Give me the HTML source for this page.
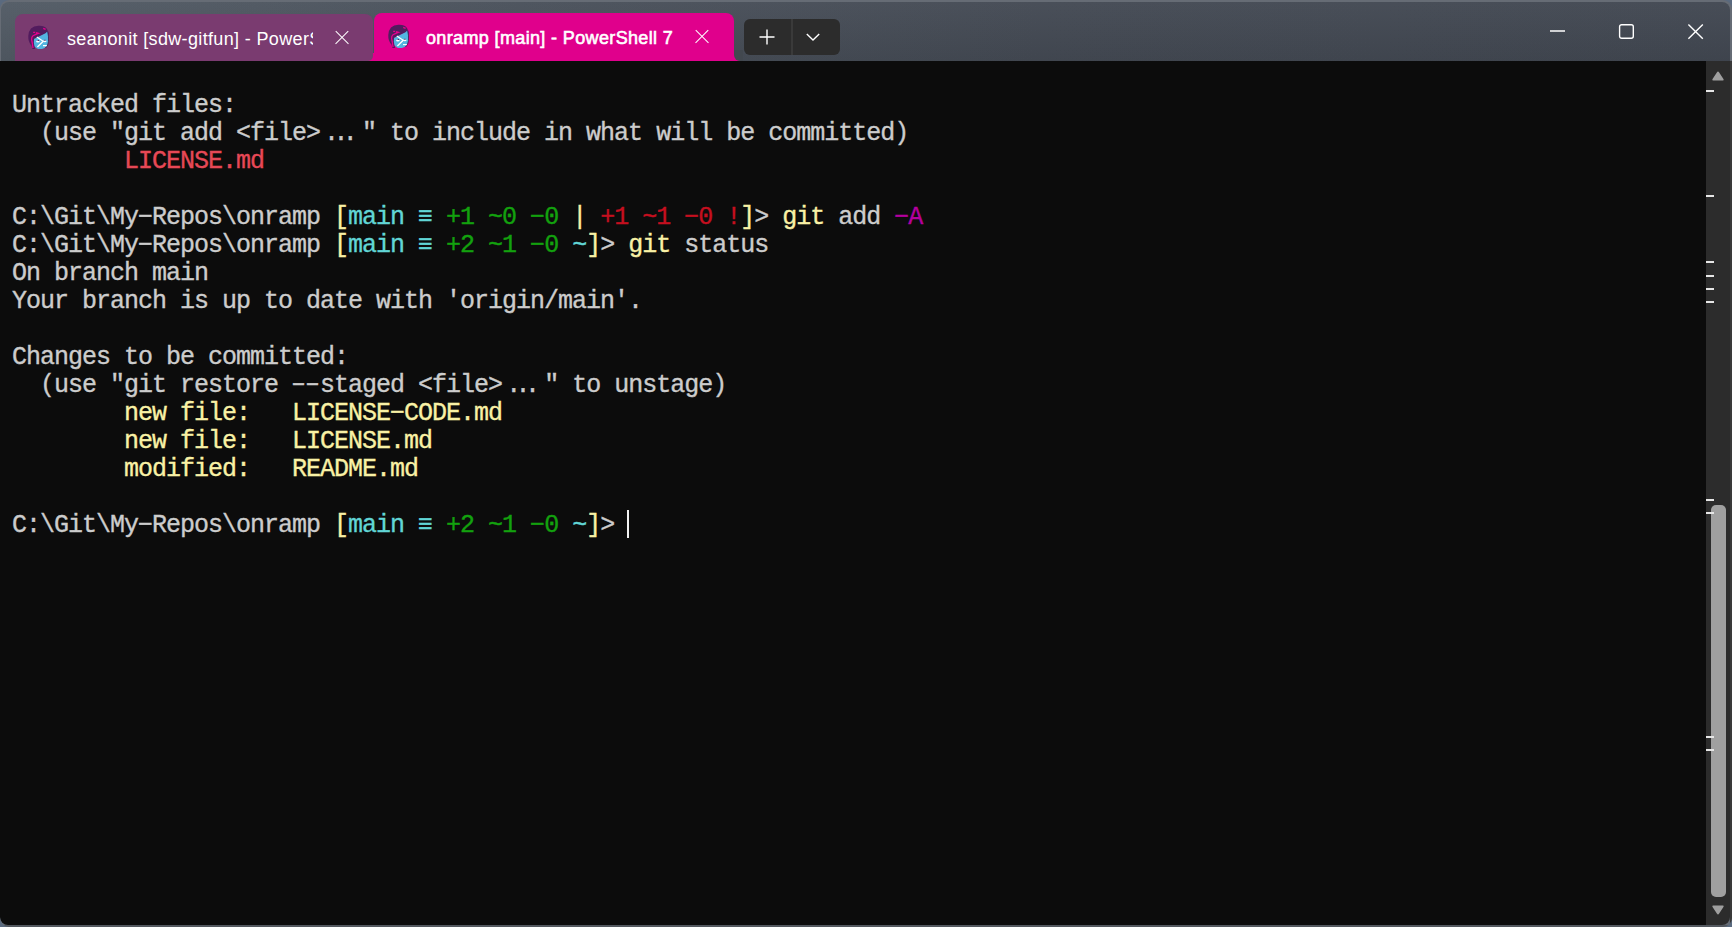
<!DOCTYPE html>
<html><head><meta charset="utf-8">
<style>
html,body{margin:0;padding:0;}
body{width:1732px;height:927px;overflow:hidden;position:relative;background:#5a6a7f;}
.win{position:absolute;left:0;top:0;width:1732px;height:927px;border-radius:9px;background:#666c75;overflow:hidden;}
.title{position:absolute;left:1px;top:2px;width:1729px;height:59px;border-radius:8px 8px 0 0;background:linear-gradient(to bottom,rgba(255,255,255,0.025),rgba(0,0,0,0.07)),linear-gradient(to right,#535c66 0%,#4b525c 30%,#454b55 60%,#434953 100%);}
.term{position:absolute;left:0;top:61px;width:1706px;height:864px;background:#0c0c0c;border-bottom-left-radius:8px;}
.sb{position:absolute;left:1706px;top:61px;width:24px;height:864px;background:#2c2c2c;border-bottom-right-radius:8px;}
.tab{position:absolute;top:14px;height:47px;border-radius:8px 8px 0 0;font-family:"Liberation Sans",sans-serif;font-size:18px;color:#fff;white-space:nowrap;overflow:hidden;}
.t1{left:15px;width:358px;background:#7a3b70;border-bottom-right-radius:5px;}
.t2{left:374px;top:13px;height:48px;width:360px;background:#e0008c;}
.ttl{position:absolute;top:11px;}
.line{position:absolute;left:12px;font-family:"Liberation Mono",monospace;font-size:25px;line-height:28px;height:28px;letter-spacing:-1px;margin-top:2px;-webkit-text-stroke:0.35px currentColor;white-space:pre;color:#cccccc;}
.r{color:#e74856}.R{color:#c50f1f}.g{color:#13a10e}.y{color:#f9f1a5}.c{color:#61d6d6}.m{color:#b4009e}
.ell{letter-spacing:-5.6px;padding-left:4px;padding-right:9.8px;}
.t1t{left:52px;top:15px;width:246px;overflow:hidden;letter-spacing:0.35px;}
.t2t{left:52px;top:15px;letter-spacing:0.36px;-webkit-text-stroke:0.6px #fff;}
.xi{position:absolute;width:16px;height:16px;}
.xi:before,.xi:after{content:"";position:absolute;left:-1px;top:7.4px;width:18px;height:1.3px;background:#fff;transform:rotate(45deg);}
.xi:after{transform:rotate(-45deg);}
.nt{position:absolute;left:744px;top:19px;width:96px;height:36px;border-radius:6px;background:#2c2c2c;}
.ntd{position:absolute;left:47px;top:0;width:2px;height:36px;background:#3a3a3a;}
.mark{position:absolute;left:1706px;width:8px;height:2px;background:#e6e6e6;}
</style></head><body>
<div class="win">
 <div class="title"></div>
 <div style="position:absolute;left:366px;top:53px;width:10px;height:8px;background:#e0008c"></div>
 <div style="position:absolute;left:732px;top:53px;width:9px;height:8px;background:#e0008c"></div>
 <div style="position:absolute;left:734px;top:50px;width:9px;height:11px;background:#42484f;border-bottom-left-radius:6px"></div>
 <div class="tab t1"><span class="ttl t1t">seanonit [sdw-gitfun] - PowerS</span></div>
 <div class="tab t2"><span class="ttl t2t">onramp [main] - PowerShell 7</span></div>
<svg class="ico" width="26" height="30" viewBox="0 0 26 30" style="position:absolute;left:25px;top:22px">
<path d="M6 6.5 Q9 3.6 14 3.8 Q19.5 3.6 22 7 L23.6 11 L23.8 17 L20.5 11.5 L9.5 16.5 L9.2 22 L10 27 L7.5 27 L6.5 23.5 Q3 20 3.3 14 Q3.6 9 6 6.5 Z" fill="#521c5e"/>
<path d="M9 17 L20.5 11.2 L22.6 9.2 Q23.8 14 23.5 19.5 Q23 25.5 17 27 Q11.5 27.6 9.6 24.2 Q8.4 21 9 17 Z" fill="#52b5e0"/>
<path d="M22.6 9.2 Q23.8 14 23.5 19.5 Q23.2 24 20.5 26" stroke="#3b1a4c" stroke-width="0.8" fill="none"/>
<path d="M8.2 10.3 L10.2 10.4 M11 10.7 L13.2 11.3 Q11 12 8 13.8 Q6.5 15 6.6 17.5 L7.3 21 L8 26" stroke="#e8008f" stroke-width="1.3" fill="none"/>
<path d="M18.2 6.3 L20.6 7.4" stroke="#e8008f" stroke-width="1.3" fill="none"/>
<path d="M11.8 15 L18.2 19.3 L12.4 25" stroke="#fff" stroke-width="1.3" fill="none"/>
<path d="M18 23.6 L21.8 23.6" stroke="#fff" stroke-width="1.1" fill="none"/>
<ellipse cx="12.9" cy="19.5" rx="1.8" ry="1.05" fill="#fff"/><ellipse cx="19.9" cy="19.2" rx="1.6" ry="0.95" fill="#fff"/>
<path d="M12.6 18.5 L14 18.5 M19.2 18.3 L20.6 18.3" stroke="#5a1e55" stroke-width="0.9" fill="none"/>
</svg><svg class="ico" width="26" height="30" viewBox="0 0 26 30" style="position:absolute;left:385px;top:21px">
<path d="M6 6.5 Q9 3.6 14 3.8 Q19.5 3.6 22 7 L23.6 11 L23.8 17 L20.5 11.5 L9.5 16.5 L9.2 22 L10 27 L7.5 27 L6.5 23.5 Q3 20 3.3 14 Q3.6 9 6 6.5 Z" fill="#521c5e"/>
<path d="M9 17 L20.5 11.2 L22.6 9.2 Q23.8 14 23.5 19.5 Q23 25.5 17 27 Q11.5 27.6 9.6 24.2 Q8.4 21 9 17 Z" fill="#52b5e0"/>
<path d="M22.6 9.2 Q23.8 14 23.5 19.5 Q23.2 24 20.5 26" stroke="#3b1a4c" stroke-width="0.8" fill="none"/>
<path d="M8.2 10.3 L10.2 10.4 M11 10.7 L13.2 11.3 Q11 12 8 13.8 Q6.5 15 6.6 17.5 L7.3 21 L8 26" stroke="#e8008f" stroke-width="1.3" fill="none"/>
<path d="M18.2 6.3 L20.6 7.4" stroke="#e8008f" stroke-width="1.3" fill="none"/>
<path d="M11.8 15 L18.2 19.3 L12.4 25" stroke="#fff" stroke-width="1.3" fill="none"/>
<path d="M18 23.6 L21.8 23.6" stroke="#fff" stroke-width="1.1" fill="none"/>
<ellipse cx="12.9" cy="19.5" rx="1.8" ry="1.05" fill="#fff"/><ellipse cx="19.9" cy="19.2" rx="1.6" ry="0.95" fill="#fff"/>
<path d="M12.6 18.5 L14 18.5 M19.2 18.3 L20.6 18.3" stroke="#5a1e55" stroke-width="0.9" fill="none"/>
</svg>
 <div class="xi" style="left:334px;top:30px"></div>
 <div class="xi" style="left:694px;top:28.5px"></div>
 <div class="nt"><div class="ntd"></div>
  <svg width="18" height="18" viewBox="0 0 18 18" style="position:absolute;left:14px;top:9px"><path d="M9 1.5 V16.5 M1.5 9 H16.5" stroke="#fff" stroke-width="1.4" fill="none"/></svg>
  <svg width="16" height="10" viewBox="0 0 16 10" style="position:absolute;left:61px;top:13px"><path d="M1.8 2 L8 8 L14.2 2" stroke="#fff" stroke-width="1.4" fill="none"/></svg>
 </div>
 <svg width="16" height="4" style="position:absolute;left:1550px;top:29px"><path d="M0 2 H15" stroke="#fff" stroke-width="1.4"/></svg>
 <svg width="18" height="18" style="position:absolute;left:1618px;top:23px"><rect x="1.6" y="1.7" width="13.7" height="13.6" rx="2" stroke="#fff" stroke-width="1.4" fill="none"/></svg>
 <svg width="18" height="18" style="position:absolute;left:1687px;top:23px"><path d="M1.4 1.4 L15.8 15.8 M15.8 1.4 L1.4 15.8" stroke="#fff" stroke-width="1.4" fill="none"/></svg>
 <div class="term"></div>
 <div class="sb"></div>
 <div style="position:absolute;left:1730px;top:61px;width:2px;height:866px;background:#3a3a3a"></div>
 <div style="position:absolute;left:0;top:925px;width:1732px;height:2px;background:#53585f"></div>
</div>
<div class="line" style="top:90px">Untracked files:</div>
<div class="line" style="top:118px">  (use "git add &lt;file&gt;<span class="ell">...</span>" to include in what will be committed)</div>
<div class="line" style="top:146px">        <span class="r">LICENSE.md</span></div>
<div class="line" style="top:202px">C:\Git\My−Repos\onramp <span class="y">[</span><span class="c">main ≡</span> <span class="g">+1 ~0 −0</span> <span class="y">|</span> <span class="R">+1 ~1 −0 !</span><span class="y">]</span>&gt; <span class="y">git</span> add <span class="m">−A</span></div>
<div class="line" style="top:230px">C:\Git\My−Repos\onramp <span class="y">[</span><span class="c">main ≡</span> <span class="g">+2 ~1 −0</span> <span class="c">~</span><span class="y">]</span>&gt; <span class="y">git</span> status</div>
<div class="line" style="top:258px">On branch main</div>
<div class="line" style="top:286px">Your branch is up to date with 'origin/main'.</div>
<div class="line" style="top:342px">Changes to be committed:</div>
<div class="line" style="top:370px">  (use "git restore <span style="position:relative;top:-1.5px;left:-1px">––</span>staged &lt;file&gt;<span class="ell">...</span>" to unstage)</div>
<div class="line" style="top:398px">        <span class="y">new file:   LICENSE−CODE.md</span></div>
<div class="line" style="top:426px">        <span class="y">new file:   LICENSE.md</span></div>
<div class="line" style="top:454px">        <span class="y">modified:   README.md</span></div>
<div class="line" style="top:510px">C:\Git\My−Repos\onramp <span class="y">[</span><span class="c">main ≡</span> <span class="g">+2 ~1 −0</span> <span class="c">~</span><span class="y">]</span>&gt; </div>
<div style="position:absolute;left:627px;top:510px;width:2px;height:28px;background:#f2f2f2"></div>
<svg width="14" height="12" style="position:absolute;left:1711px;top:70px"><path d="M7 1.5 Q7.6 1.5 8 2.2 L12.6 9.2 Q13 10.5 11.8 10.5 L2.2 10.5 Q1 10.5 1.4 9.2 L6 2.2 Q6.4 1.5 7 1.5 Z" fill="#9f9f9f"/></svg>
<svg width="14" height="12" style="position:absolute;left:1711px;top:904px"><path d="M7 10.5 Q7.6 10.5 8 9.8 L12.6 2.8 Q13 1.5 11.8 1.5 L2.2 1.5 Q1 1.5 1.4 2.8 L6 9.8 Q6.4 10.5 7 10.5 Z" fill="#9f9f9f"/></svg>
<div style="position:absolute;left:1710.5px;top:504.5px;width:15px;height:392px;border-radius:5px;background:#a0a0a0"></div>
<div class="mark" style="top:90px"></div>
<div class="mark" style="top:195px"></div>
<div class="mark" style="top:261px"></div>
<div class="mark" style="top:275px"></div>
<div class="mark" style="top:288px"></div>
<div class="mark" style="top:301px"></div>
<div class="mark" style="top:499px"></div>
<div class="mark" style="top:512px"></div>
<div class="mark" style="top:736px"></div>
<div class="mark" style="top:749px"></div>
</body></html>
